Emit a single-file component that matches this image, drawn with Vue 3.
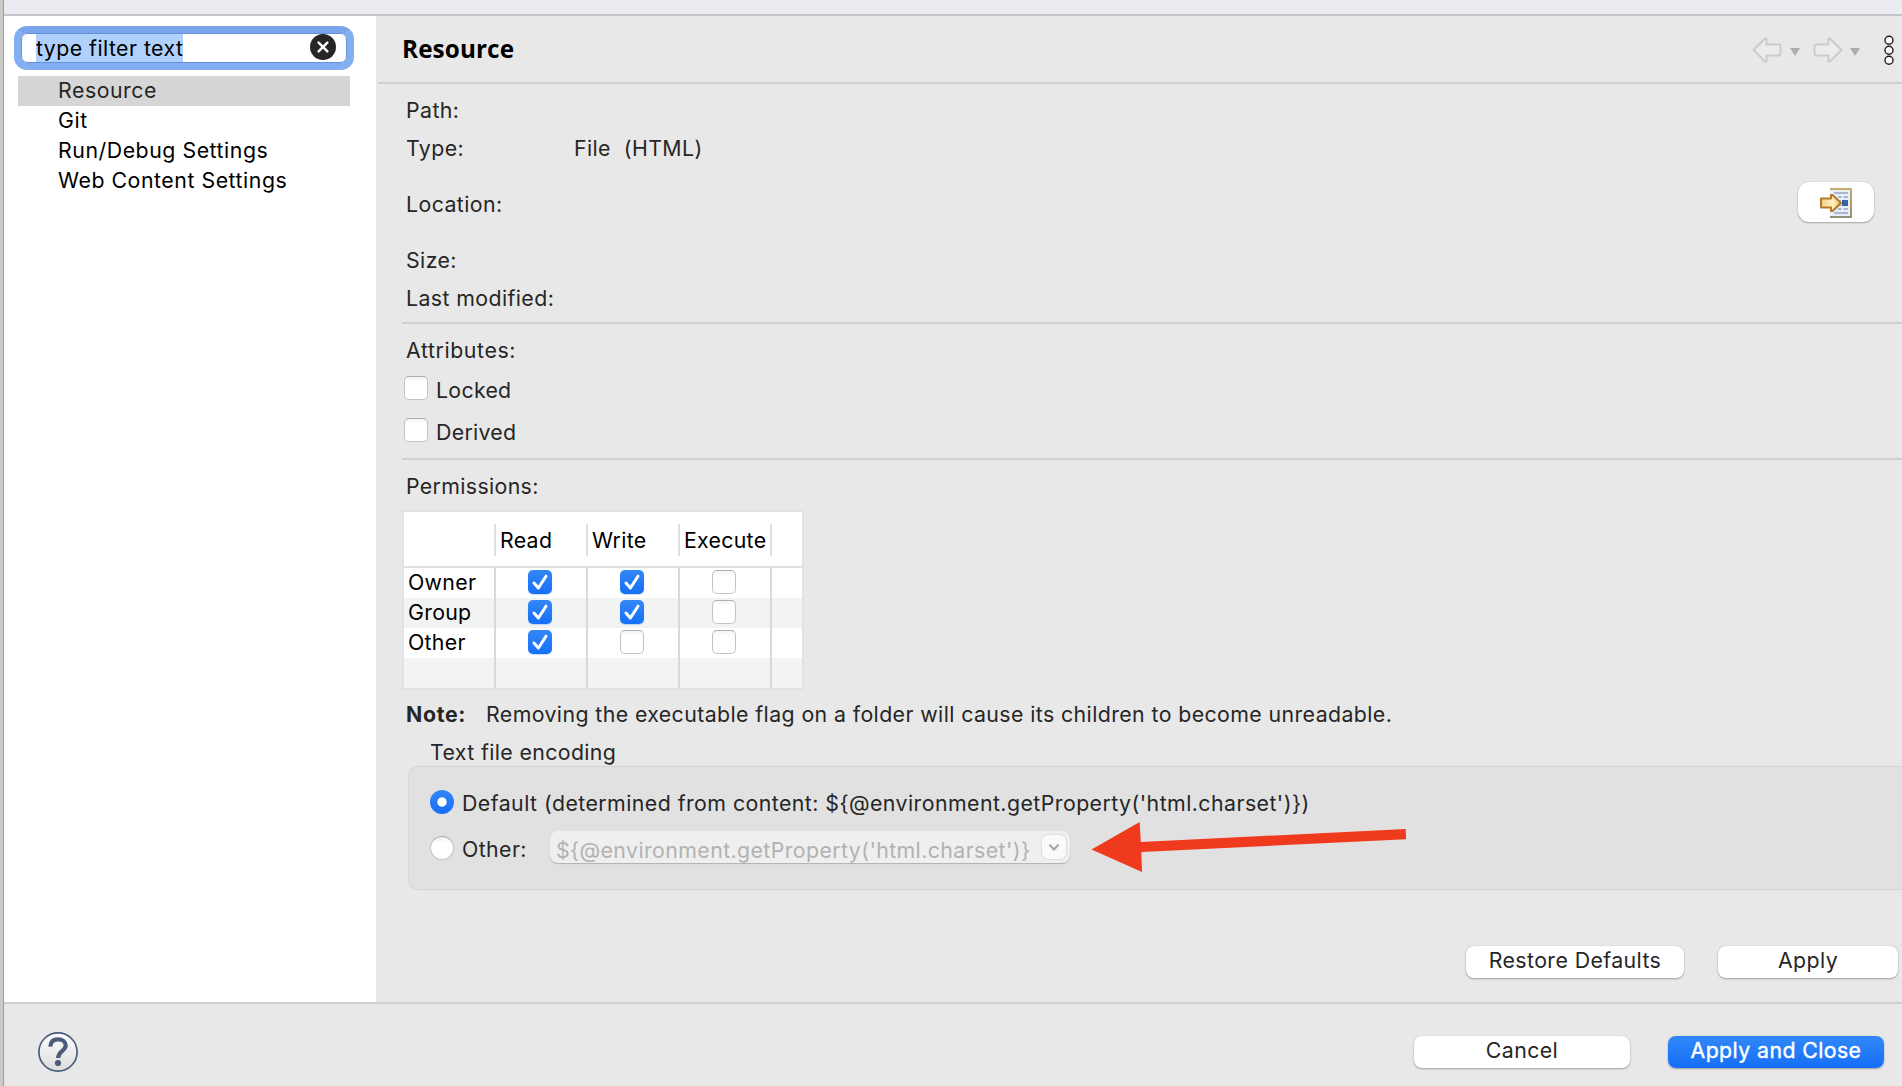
<script setup>
import { ref } from 'vue'

const categories = ['Resource', 'Git', 'Run/Debug Settings', 'Web Content Settings']
const active = ref('Resource')
const columns = ['Read', 'Write', 'Execute']
const permissions = [
  { name: 'Owner', flags: [true, true, false] },
  { name: 'Group', flags: [true, true, false] },
  { name: 'Other', flags: [true, false, false] },
]
const encoding = "${@environment.getProperty('html.charset')}"
</script>

<template>
  <div class="window">
    <div class="edge"></div>
    <div class="dialog">
      <div class="titlebar"></div>
      <div class="content">
        <aside class="sidebar">
          <div class="search">
            <span class="query">type filter text</span>
            <svg class="clear" width="26" height="26" viewBox="0 0 26 26">
              <circle cx="13" cy="13" r="13" fill="#262626" />
              <path d="M8.6 8.6 17.4 17.4M17.4 8.6 8.6 17.4" stroke="#fff" stroke-width="2.4" stroke-linecap="round" />
            </svg>
          </div>
          <ul class="tree">
            <li v-for="c in categories" :key="c" :class="{ active: c === active }" @click="active = c">{{ c }}</li>
          </ul>
        </aside>

        <main class="page">
          <header class="head">
            <h1>Resource</h1>
            <div class="nav">
              <svg width="30" height="26" viewBox="0 0 30 26">
                <path d="M1.5 13 13 1.5H14.500V7.500H26.500Q28.500 7.500 28.500 9.500V16.500Q28.500 18.500 26.500 18.500H14.500V24.500H13Z" fill="#ececec" stroke="#cbcbcb" stroke-width="2" stroke-linejoin="round" />
              </svg>
              <svg class="caret" width="10" height="8" viewBox="0 0 10 8"><path d="M0 0H10L5 8Z" fill="#adadad" /></svg>
              <svg width="30" height="26" viewBox="0 0 30 26">
                <path d="M28.500 13 17 1.500H15.500V7.500H3.500Q1.500 7.500 1.500 9.500V16.500Q1.500 18.500 3.500 18.500H15.500V24.500H17Z" fill="#ececec" stroke="#cbcbcb" stroke-width="2" stroke-linejoin="round" />
              </svg>
              <svg class="caret second" width="10" height="8" viewBox="0 0 10 8"><path d="M0 0H10L5 8Z" fill="#adadad" /></svg>
              <svg class="menu" width="10" height="30" viewBox="0 0 10 30">
                <g fill="#fff" stroke="#1c1c1c" stroke-width="1.4">
                  <circle cx="5" cy="5.300" r="4" />
                  <circle cx="5" cy="15.300" r="4" />
                  <circle cx="5" cy="25.300" r="4" />
                </g>
              </svg>
            </div>
          </header>

          <section class="info">
            <div class="row path"><span class="label">Path:</span></div>
            <div class="row type"><span class="label">Type:</span><span class="value">File&nbsp; (HTML)</span></div>
            <div class="row location">
              <span class="label">Location:</span>
              <button class="show">
                <svg width="34" height="32" viewBox="0 0 34 32">
                  <defs>
                    <linearGradient id="gold" x1="0" y1="0" x2="1" y2="0">
                      <stop offset="0" stop-color="#f0cf86" />
                      <stop offset=".6" stop-color="#fff1bf" />
                      <stop offset="1" stop-color="#e9bd62" />
                    </linearGradient>
                    <linearGradient id="frame" x1="0" y1="0" x2="0" y2="1">
                      <stop offset="0" stop-color="#c4b06a" />
                      <stop offset="1" stop-color="#918d78" />
                    </linearGradient>
                  </defs>
                  <path d="M11 1H33V31H11Z" fill="url(#frame)" />
                  <path d="M11 3H31V29H11Z" fill="#e9eff8" />
                  <path d="M15 6H29M19 10H22.500M24.500 10H29M19 22H22.500M24.500 22H29M15 26H29" stroke="#a9b6d3" stroke-width="2" />
                  <path d="M15 14H22M15 18H22" stroke="#a9b6d3" stroke-width="2" />
                  <path d="M23 13H29V19H23Z" fill="#3a62a0" />
                  <path d="M2 11.500H12V8H13.500L22 16L13.500 24H12V20.500H2Z" fill="url(#gold)" stroke="#b47a26" stroke-width="2" stroke-linejoin="round" />
                </svg>
              </button>
            </div>
            <div class="row size"><span class="label">Size:</span></div>
            <div class="row modified"><span class="label">Last modified:</span></div>
          </section>

          <section class="attributes">
            <div class="title">Attributes:</div>
            <label class="check locked"><i class="box"></i>Locked</label>
            <label class="check"><i class="box"></i>Derived</label>
          </section>

          <section class="perm">
            <div class="title">Permissions:</div>
            <div class="table">
              <div class="thead">
                <div class="th"></div>
                <div v-for="c in columns" :key="c" class="th">{{ c }}</div>
              </div>
              <div v-for="p in permissions" :key="p.name" class="tr">
                <div class="td name">{{ p.name }}</div>
                <div v-for="(f, i) in p.flags" :key="i" class="td">
                  <i class="box" :class="{ on: f }">
                    <svg v-if="f" width="24" height="24" viewBox="0 0 24 24">
                      <path d="M6 13 10.400 18 18 6.200" fill="none" stroke="#fff" stroke-width="3" stroke-linecap="round" stroke-linejoin="round" />
                    </svg>
                  </i>
                </div>
              </div>
              <div class="tr"><div v-for="n in 4" :key="n" class="td"></div></div>
            </div>
            <div class="note"><b>Note:</b><span>Removing the executable flag on a folder will cause its children to become unreadable.</span></div>
          </section>

          <section class="encoding">
            <div class="legend">Text file encoding</div>
            <div class="group">
              <label class="option default"><i class="radio on"></i><span>Default (determined from content: {{ encoding }})</span></label>
              <div class="option other">
                <i class="radio"></i><span class="olabel">Other:</span>
                <div class="combo">
                  <span>{{ encoding }}</span>
                  <i class="drop">
                    <svg width="10" height="7" viewBox="0 0 10 7"><path d="M1 1.200 5 5.400 9 1.200" fill="none" stroke="#a6a6a6" stroke-width="2.200" stroke-linecap="round" stroke-linejoin="round" /></svg>
                  </i>
                </div>
              </div>
              <svg class="pointer" width="330" height="56" viewBox="0 0 330 56">
                <path d="M11.500 30.500 59.700 3L60.800 23L325.700 10L326 20.300L61.300 33L62 53Z" fill="#f03a1d" />
              </svg>
            </div>
          </section>

          <div class="actions">
            <button class="btn restore">Restore Defaults</button>
            <button class="btn apply">Apply</button>
          </div>
        </main>
      </div>

      <footer class="footer">
        <svg class="help" width="40" height="40" viewBox="0 0 40 40">
          <defs>
            <linearGradient id="disc" x1="0" y1="0" x2="0" y2="1">
              <stop offset="0" stop-color="#fdfdfd" />
              <stop offset="1" stop-color="#dcdcdc" />
            </linearGradient>
          </defs>
          <circle cx="20" cy="20" r="19.100" fill="url(#disc)" stroke="#4a5d7c" stroke-width="1.700" />
          <path d="M12.300 14.700C12.600 10 15.500 7.400 20 7.400C24.700 7.400 27.700 10 27.700 13.600C27.700 19.300 20.200 18.600 20.200 26" fill="none" stroke="#4a5d7c" stroke-width="4.200" />
          <circle cx="20" cy="31" r="3.100" fill="#4a5d7c" />
        </svg>
        <div class="confirm">
          <button class="btn cancel">Cancel</button>
          <button class="btn primary">Apply and Close</button>
        </div>
      </footer>
    </div>
  </div>
</template>

<style>
body {
  margin: 0;
  overflow: hidden;
}
</style>

<style scoped>
* {
  box-sizing: border-box;
}
.window {
  display: flex;
  width: 1902px;
  height: 1086px;
  overflow: hidden;
  background: #e8e8e8;
  color: #262626;
  font: 21.3px/30px Inter, 'Liberation Sans', sans-serif;
  letter-spacing: 0.41px;
  white-space: nowrap;
}
.edge {
  width: 4px;
  background: #cbcac9;
  border-right: 1px solid #9c9c9c;
}
.dialog {
  flex: 1;
  min-width: 0;
  display: flex;
  flex-direction: column;
}
.titlebar {
  height: 16px;
  background: #ebecf2;
  border-bottom: 2px solid #c4c5c9;
}
.content {
  display: flex;
  height: 986px;
}
.sidebar {
  width: 372px;
  background: #fff;
  color: #000;
}
.search {
  display: flex;
  align-items: center;
  justify-content: space-between;
  width: 340px;
  height: 44px;
  margin: 10px 0 0 10px;
  padding: 0 11px 0 15px;
  border: 7px solid #83aef2;
  border-top-color: #7ba5ea;
  border-radius: 13px;
  box-shadow: inset 0 0 0 1px #6391da;
}
.query {
  height: 28px;
  line-height: 28px;
  letter-spacing: 0.45px;
  background: #b0d1fc;
}
.clear {
  margin-bottom: 2px;
}
.tree {
  list-style: none;
  margin: 6px 0 0 14px;
  padding: 0;
  width: 332px;
}
.tree li {
  height: 30px;
  padding-left: 40px;
  line-height: 28px;
  letter-spacing: 0.54px;
}
.tree .active {
  background: #d6d6d6;
  color: #262626;
}
.page {
  flex: 1;
  min-width: 0;
  display: flex;
  flex-direction: column;
}
.head {
  display: flex;
  justify-content: space-between;
  height: 68px;
  margin-left: 2px;
  padding-left: 24px;
  border-bottom: 2px solid #d0d0d0;
}
h1 {
  margin: 17px 0 0;
  font: bold 24.3px/32px 'Open Sans', 'Noto Sans', sans-serif;
  letter-spacing: 0.1px;
  color: #000;
}
.nav {
  display: flex;
  align-items: center;
  height: 68px;
  padding-right: 8px;
}
.caret {
  margin: 4px 13px 0 8px;
}
.caret.second {
  margin-left: 7px;
}
.menu {
  margin-left: 11px;
}
.info {
  height: 240px;
  margin-left: 26px;
  padding: 11px 28px 0 4px;
  border-bottom: 2px solid #d0d0d0;
}
.row {
  display: flex;
  height: 30px;
}
.label {
  width: 168px;
}
.type {
  margin-top: 8px;
}
.location {
  margin-top: 26px;
}
.size {
  margin-top: 26px;
}
.modified {
  margin-top: 8px;
}
button {
  font: inherit;
  letter-spacing: inherit;
  color: inherit;
  border: 0;
  padding: 0;
  background: #fff;
}
.show {
  display: flex;
  align-items: center;
  justify-content: center;
  width: 76px;
  height: 40px;
  margin: -7px 0 0 auto;
  padding-top: 2px;
  border-radius: 11px;
  box-shadow: 0 1px 2px rgba(0, 0, 0, 0.28), 0 0 1px rgba(0, 0, 0, 0.25);
}
.attributes {
  height: 136px;
  margin-left: 26px;
  padding: 11px 0 0 4px;
  border-bottom: 2px solid #d0d0d0;
}
.attributes .title {
  letter-spacing: 0.6px;
}
.check {
  display: flex;
  height: 30px;
  margin: 12px 0 0 -2px;
  letter-spacing: 0.3px;
}
.check.locked {
  margin-top: 10px;
}
.check .box {
  margin: 1px 8px 0 0;
}
.box {
  display: block;
  width: 24px;
  height: 24px;
  flex: none;
  border: 1px solid #c3c3c3;
  border-top-color: #b0b0b0;
  border-radius: 5px;
  background: linear-gradient(#f4f4f4, #fff 25%);
}
.box.on {
  border: 0;
  background: linear-gradient(#3487f7, #166ff5);
  box-shadow: 0 1px 1px rgba(22, 111, 245, 0.25);
}
.box svg {
  display: block;
}
.perm {
  margin-left: 26px;
  padding-top: 11px;
}
.perm .title {
  padding-left: 4px;
  letter-spacing: 0.35px;
}
.table {
  width: 402px;
  height: 180px;
  margin-top: 9px;
  border: 2px solid #e2e2e2;
  background: #fff;
  color: #000;
  letter-spacing: 0.3px;
}
.thead,
.tr {
  display: grid;
  grid-template-columns: 92px 92px 92px 92px;
}
.thead {
  height: 56px;
  padding-top: 12px;
  border-bottom: 2px solid #e0e0e0;
}
.th {
  height: 32px;
  padding-left: 4px;
  border-right: 2px solid #e0e0e0;
  line-height: 32px;
}
.tr {
  height: 30px;
}
.tr:nth-child(odd) {
  background: #f2f3f3;
}
.td {
  display: flex;
  justify-content: center;
  padding: 2px 2px 0 0;
  border-right: 2px solid #d9d9d9;
}
.td.name {
  justify-content: flex-start;
  padding: 0 0 0 4px;
  line-height: 28px;
}
.note {
  display: flex;
  margin-top: 9px;
  padding-left: 4px;
}
.note b {
  width: 80px;
  letter-spacing: 0.7px;
}
.encoding {
  margin-left: 32px;
}
.legend {
  margin: 8px 0 0 22px;
  height: 29px;
  letter-spacing: 0.38px;
}
.group {
  position: relative;
  height: 124px;
  padding: 21px 0 0 21px;
  border: 1px solid #d6d6d6;
  border-right: 0;
  border-radius: 10px 0 0 10px;
  background: #e1e1e1;
}
.option {
  display: flex;
  height: 30px;
}
.default {
  letter-spacing: 0.45px;
}
.radio {
  flex: none;
  width: 24px;
  height: 24px;
  margin: 2px 8px 0 0;
  border: 1px solid #c3c3c3;
  border-top-color: #a8a8a8;
  border-radius: 50%;
  background: linear-gradient(#f2f2f2, #fff 30%);
}
.radio.on {
  border: 0;
  background: radial-gradient(circle, #fff 4.3px, transparent 5px), linear-gradient(#3487f7, #166ff5);
}
.other {
  margin-top: 16px;
}
.olabel {
  width: 88px;
}
.combo {
  display: flex;
  justify-content: space-between;
  width: 520px;
  height: 32px;
  margin-top: -3px;
  padding: 4px 4px 0 6px;
  border-radius: 8px;
  background: #efefef;
  box-shadow: 0 1px 1px rgba(0, 0, 0, 0.22);
  color: #b2b2b2;
}
.drop {
  display: flex;
  align-items: center;
  justify-content: center;
  width: 24px;
  height: 24px;
  border-radius: 6px;
  background: #fafafa;
  box-shadow: 0 0 2px rgba(0, 0, 0, 0.22);
}
.pointer {
  position: absolute;
  left: 671px;
  top: 52px;
}
.actions {
  display: flex;
  gap: 34px;
  justify-content: flex-end;
  margin-top: 56px;
  padding-right: 4px;
}
.btn {
  height: 32px;
  padding-bottom: 4px;
  border-radius: 8px;
  line-height: 28px;
  box-shadow: 0 1px 2px rgba(0, 0, 0, 0.3), 0 0 1px rgba(0, 0, 0, 0.2);
}
.restore {
  width: 218px;
}
.apply {
  width: 180px;
}
.footer {
  display: flex;
  justify-content: space-between;
  height: 84px;
  padding: 28px 18px 0 34px;
  border-top: 2px solid #d0d0d0;
}
.confirm {
  display: flex;
  gap: 38px;
  padding-top: 4px;
}
.cancel,
.primary {
  width: 216px;
}
.primary {
  background: linear-gradient(#3287f8, #156ff6);
  color: #fff;
  -webkit-text-stroke: 0.4px #fff;
}
</style>
